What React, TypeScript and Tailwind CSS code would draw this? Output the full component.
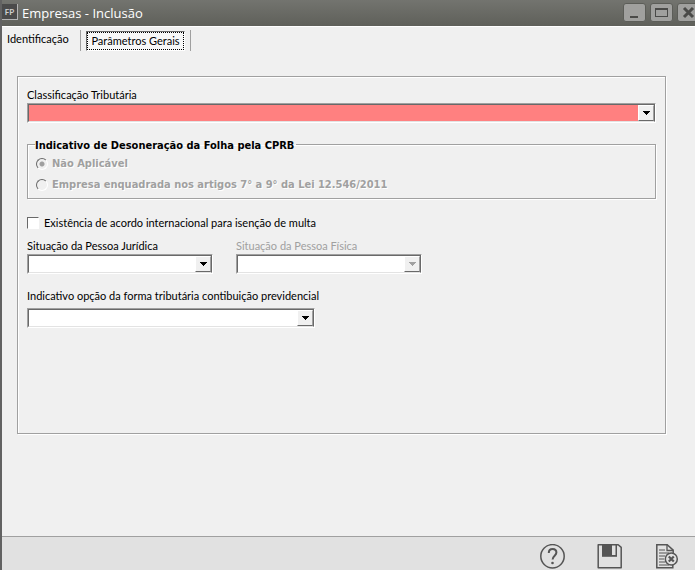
import { useState, type ReactNode } from "react";
import clsx from "clsx";

const etched = "border border-[#a0a0a0] shadow-[1px_1px_0_#fff,inset_1px_1px_0_#fff]";

const disabledText = "text-[#a0a0a0] [text-shadow:1px_1px_0_#fff]";

const boldText = "font-['DejaVu_Sans_Condensed','Noto_Sans',sans-serif] font-bold";

const payrollOptions = [
  { id: "nao-aplicavel", label: "Não Aplicável" },
  { id: "empresa-enquadrada", label: "Empresa enquadrada nos artigos 7° a 9° da Lei 12.546/2011" },
];

type ComboProps = {
  id: string;
  label: string;
  className?: string;
  required?: boolean;
  disabled?: boolean;
};

function Combo({ id, label, className, required, disabled }: ComboProps) {
  return (
    <div className={clsx("flex flex-col", className)}>
      <label htmlFor={id} className={clsx("leading-4 whitespace-nowrap", disabled && "text-[#a0a0a0]")}>
        {label}
      </label>
      <div className="border border-t-[#a0a0a0] border-l-[#a0a0a0] border-r-white border-b-white">
        <div
          className={clsx(
            "flex h-[18px] border border-t-[#696969] border-l-[#696969] border-r-[#696969] border-b-[#e3e3e3]",
            required ? "bg-[#ff8080]" : "bg-white"
          )}
        >
          <select
            id={id}
            required={required}
            disabled={disabled}
            className="min-w-0 flex-1 appearance-none bg-transparent px-1 outline-none"
          />
          <span className="pointer-events-none flex w-4 items-center justify-center border border-t-white border-l-white border-r-[#a0a0a0] border-b-[#696969] bg-[#f0f0f0]">
            <svg width="7" height="4" viewBox="0 0 7 4" shapeRendering="crispEdges">
              <path d="M0 0h7v1H6v1H5v1H4v1H3V3H2V2H1V1H0z" fill={disabled ? "#a0a0a0" : "#000"} />
            </svg>
          </span>
        </div>
      </div>
    </div>
  );
}

function WindowButton({ label, children }: { label: string; children: ReactNode }) {
  return (
    <button
      aria-label={label}
      className="flex h-[19px] w-[23px] shrink-0 items-center justify-center rounded-[3px] border border-[#5c5d58] bg-[#a0a09e]"
    >
      <svg width="15" height="15" viewBox="0 0 15 15" fill="none" stroke="#4a4a48" shapeRendering="crispEdges">
        {children}
      </svg>
    </button>
  );
}

function TitleBar() {
  return (
    <header className="flex h-[26px] items-start overflow-hidden bg-gradient-to-b from-[#73746f] to-[#5f605a]">
      <span className="mt-1 mr-1 flex h-4 w-4 items-center justify-center border-r border-b border-[#b5b5b5] bg-[#4b4b4b] text-[8px] font-bold text-[#d0d0d0]">
        FP
      </span>
      <h1 className="flex-1 font-['Open_Sans','Noto_Sans',sans-serif] text-[13px] leading-[26px] text-white">
        Empresas - Inclusão
      </h1>
      <div className="mt-[3px] -mr-[5px] flex gap-1">
        <WindowButton label="Minimizar">
          <path d="M3 12h8" strokeWidth="2" />
        </WindowButton>
        <WindowButton label="Maximizar">
          <path d="M1.5 3v8.5h12V3" />
          <path d="M1 4h13" strokeWidth="2" />
        </WindowButton>
        <WindowButton label="Fechar">
          <path d="M3 3l9 9M12 3l-9 9" strokeWidth="3" shapeRendering="auto" />
        </WindowButton>
      </div>
    </header>
  );
}

function HelpIcon() {
  return (
    <svg width="26" height="26" viewBox="0 0 26 26" fill="none" stroke="#555">
      <circle cx="13.5" cy="12.3" r="11.7" strokeWidth="1.5" />
      <path d="M9.8 9c0-2.5 1.5-4 3.8-4s3.8 1.5 3.8 3.6c0 3.1-3.8 3.2-3.8 7" strokeWidth="2" />
      <circle cx="13.5" cy="19" r="1.3" fill="#555" stroke="none" />
    </svg>
  );
}

function SaveIcon() {
  return (
    <svg width="26" height="26" viewBox="0 0 26 26" fill="none" stroke="#555">
      <path d="M1.2 .8h20l3 2.6v20.3H1.2z" strokeWidth="1.5" strokeLinejoin="round" />
      <path d="M5 .5h15v12.3H5z" fill="#555" stroke="none" />
      <path d="M15 1.5h3.5V11H15z" fill="#e1e1e1" stroke="none" />
    </svg>
  );
}

function CancelIcon() {
  return (
    <svg width="24" height="26" viewBox="0 0 24 26" fill="none" stroke="#555">
      <path d="M18.2 10V6.2L12.2.8H1.8v23h16v-3" strokeWidth="1.5" />
      <path d="M12 .8v5.7h6" strokeWidth="1.3" />
      <path d="M4 6h6M4 9h10M4 12h6M4 15h5M4 18h6M4 21h10" strokeWidth="1.2" />
      <circle cx="16.3" cy="15" r="6" fill="#e1e1e1" strokeWidth="1.5" />
      <path d="M13.8 12.5l5 5M18.8 12.5l-5 5" strokeWidth="2.2" />
    </svg>
  );
}

export default function App() {
  const [agreement, setAgreement] = useState(false);

  return (
    <div className="flex min-h-screen flex-col bg-[#f0f0f0] font-['Lato','Noto_Sans',sans-serif] text-[11px] text-black">
      <div className="flex flex-1 flex-col border-l-2 border-[#626262]">
        <TitleBar />

        {/* Tabs */}
        <nav role="tablist" className="flex h-6 items-center border-t border-white pt-1 pl-[5px]">
          <button role="tab" aria-selected={false} className="w-[73px] pb-1 text-left leading-4">
            Identificação
          </button>
          <span className="h-[21px] w-px bg-[#a0a0a0]" />
          <button
            role="tab"
            aria-selected
            className="mx-[5px] h-5 border border-t-[#696969] border-l-[#696969] border-r-white border-b-white bg-[#f8f8f8]"
          >
            <span className="block w-[97px] border border-dotted border-black leading-4 whitespace-nowrap">
              Parâmetros Gerais
            </span>
          </button>
          <span className="h-[21px] w-px bg-[#a0a0a0]" />
        </nav>

        {/* Form */}
        <main className={clsx("mt-[26px] mr-[29px] mb-[102px] ml-[15px] flex-1 px-[9px] pt-[10px]", etched)}>
          <Combo id="classificacao" label="Classificação Tributária" required />

          <fieldset disabled className={clsx("mt-3 h-16 px-2", etched)}>
            <legend className={clsx("-ml-px pt-1 pr-[2px] leading-[14px]", boldText)}>
              Indicativo de Desoneração da Folha pela CPRB
            </legend>
            <div className="flex flex-col gap-[5px] pt-[3px]">
              {payrollOptions.map((option, index) => (
                <label key={option.id} className={clsx("flex items-center gap-1 leading-4", boldText, disabledText)}>
                  <input
                    type="radio"
                    name="desoneracao"
                    value={option.id}
                    defaultChecked={index === 0}
                    className="h-3 w-3 appearance-none rounded-full border border-t-[#696969] border-l-[#696969] border-r-white border-b-white checked:bg-[radial-gradient(#a0a0a0_2px,transparent_3px)]"
                  />
                  {option.label}
                </label>
              ))}
            </div>
          </fieldset>

          <label className="mt-4 flex items-center gap-[5px] leading-4">
            <input
              type="checkbox"
              checked={agreement}
              onChange={(e) => setAgreement(e.target.checked)}
              className="h-3 w-3 appearance-none border border-t-[#696969] border-l-[#696969] border-r-white border-b-white bg-white checked:bg-black"
            />
            Existência de acordo internacional para isenção de multa
          </label>

          <div className="mt-[7px] flex gap-[23px]">
            <Combo id="pessoa-juridica" label="Situação da Pessoa Jurídica" className="w-[186px]" />
            <Combo id="pessoa-fisica" label="Situação da Pessoa Física" className="w-[186px]" disabled />
          </div>

          <Combo
            id="opcao-tributaria"
            label="Indicativo opção da forma tributária contibuição previdencial"
            className="mt-[14px] w-[288px] gap-1"
          />
        </main>

        <footer className="flex h-[34px] items-end justify-end gap-8 border-t border-[#a0a0a0] bg-[#e1e1e1] pr-4">
          <button aria-label="Ajuda">
            <HelpIcon />
          </button>
          <button aria-label="Gravar">
            <SaveIcon />
          </button>
          <button aria-label="Cancelar">
            <CancelIcon />
          </button>
        </footer>
      </div>
    </div>
  );
}
